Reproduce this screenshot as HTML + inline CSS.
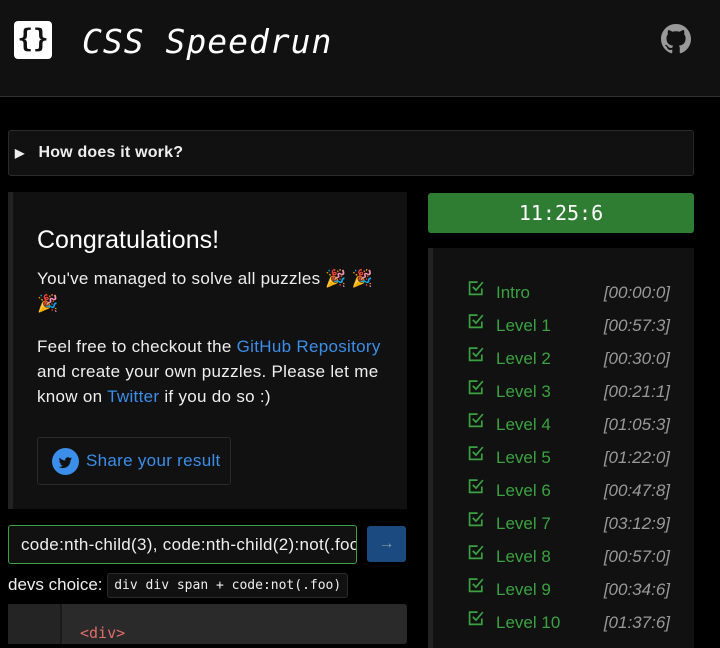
<!DOCTYPE html>
<html><head><style>
*{box-sizing:border-box;margin:0;padding:0}
body{width:720px;height:638px;overflow:hidden;background:#000;font-family:"Liberation Sans",sans-serif;color:#eee;position:relative}
.hdr{position:absolute;left:0;top:0;width:720px;height:97px;background:#111;border-bottom:1px solid #333}
.logo{position:absolute;left:14px;top:21px;width:38px;height:38px;background:#fff;border-radius:4px;color:#111;font:bold 26px "DejaVu Sans Mono",monospace;text-align:center;line-height:36px}
.title{position:absolute;left:82px;top:22px;font:33px "DejaVu Sans Mono",monospace;color:#fff;letter-spacing:1px;font-style:italic}
.det{position:absolute;left:8px;top:130px;width:686px;height:46px;background:#111;border:1px solid #2a2a2a;border-radius:3px;font-weight:bold;font-size:16px;line-height:44px;padding-left:6px;letter-spacing:.2px}
.det i{font-style:normal;font-size:12px;margin-right:14px}
.left{position:absolute;left:8px;top:192px;width:399px;height:317px;background:#111;border-left:5px solid #222;padding:34px 0 0 24px}
h2{font-weight:normal;font-size:25px;color:#fff;margin-bottom:11px}
p{font-size:17px;line-height:25px;color:#eee;letter-spacing:.3px}
a{color:#3b8eea;text-decoration:none}
.share{position:absolute;left:24px;top:245px;width:194px;height:48px;border:1px solid #2a2a2a;border-radius:3px;color:#3b8eea;font-size:17px;line-height:46px;padding-left:48px;letter-spacing:.3px}
.tw{position:absolute;left:14px;top:10px;width:27px;height:27px;border-radius:50%;background:#3b8eea}
.timer{position:absolute;left:428px;top:193px;width:266px;height:40px;background:#2e7d32;border-radius:3px;text-align:center;font:20px "DejaVu Sans Mono",monospace;line-height:40px;color:#fff}
.list{position:absolute;left:428px;top:248px;width:266px;height:400px;background:#111;border-left:5px solid #222}
.row{position:absolute;left:35px;width:202px;height:33px;font-size:17px}
.row svg{position:absolute;left:0;top:-3px}
.row .lb{position:absolute;left:28px;top:0;color:#3aa240}
.row .tm{position:absolute;right:0;top:0;color:#999;font-style:italic}
.inp{position:absolute;left:8px;top:525px;width:349px;height:39px;background:#111;border:1px solid #3aa240;border-radius:3px;font-size:17px;line-height:37px;padding-left:12px;white-space:nowrap;overflow:hidden;color:#eee;letter-spacing:.3px}
.btn{position:absolute;left:367px;top:526px;width:39px;height:36px;background:#1a4a80;border-radius:3px;color:#8899aa;text-align:center;line-height:36px;font-size:16px}
.dc{position:absolute;left:8px;top:573px;font-size:17px;line-height:22px}
.dc code{display:inline-block;background:#111;border:1px solid #2a2a2a;border-radius:3px;font:13px "DejaVu Sans Mono",monospace;padding:3px 6px;line-height:17px;vertical-align:middle}
.code{position:absolute;left:8px;top:604px;width:399px;height:40px;background:#2a2a2a;border-radius:3px}
.gut{position:absolute;left:0;top:0;width:54px;height:40px;background:#242424;border-right:2px solid #1a1a1a}
.code span{position:absolute;left:72px;top:20px;font:15px "DejaVu Sans Mono",monospace;color:#e06c6c}
</style></head><body>
<div class="hdr"><div class="logo">{}</div><div class="title">CSS Speedrun</div>
<svg style="position:absolute;left:661px;top:24px" width="30" height="30" viewBox="0 0 16 16"><path fill="#999" d="M8 0C3.580 0 0 3.58 0 8c0 3.54 2.29 6.530 5.470 7.59.4.07.55-.17.55-.38 0-.19-.01-.82-.01-1.49-2.01.37-2.53-.49-2.69-.94-.09-.23-.48-.94-.82-1.13-.28-.15-.68-.52-.01-.53.63-.01 1.080.58 1.23.82.72 1.21 1.87.87 2.33.66.07-.52.28-.87.51-1.07-1.78-.2-3.64-.89-3.64-3.950 0-.87.31-1.59.82-2.15-.08-.2-.36-1.020.08-2.12 0 0 .67-.21 2.2.82.64-.18 1.32-.27 2-.27.68 0 1.36.09 2 .27 1.53-1.04 2.2-.82 2.2-.82.44 1.1.16 1.92.08 2.12.51.56.82 1.27.82 2.150 0 3.07-1.87 3.75-3.65 3.95.29.25.54.73.54 1.480 0 1.07-.01 1.93-.01 2.2 0 .21.15.46.55.38A8.013 8.013 0 0016 8c0-4.42-3.58-8-8-8z"/></svg></div>
<div class="det"><i>▶</i>How does it work?</div>
<div class="left"><h2>Congratulations!</h2>
<p>You've managed to solve all puzzles 🎉 🎉<br>🎉</p><br>
<p>Feel free to checkout the <a>GitHub Repository</a><br>and create your own puzzles. Please let me<br>know on <a>Twitter</a> if you do so :)</p>
<div class="share"><div class="tw"><svg width="27" height="27" viewBox="0 0 27 27"><path fill="#111" d="M20 9.5c-.5.2-1 .4-1.6.4.6-.3 1-.9 1.2-1.5-.5.3-1.1.5-1.7.7-.5-.6-1.2-.9-2-.9-1.5 0-2.700 1.200-2.700 2.700 0 .2 0 .4.1.6-2.300-.1-4.300-1.200-5.600-2.800-.2.400-.4.900-.4 1.400 0 .9.5 1.800 1.200 2.200-.4 0-.9-.1-1.200-.3 0 1.300.9 2.400 2.200 2.700-.4.1-.8.1-1.200.1.3 1.100 1.300 1.900 2.500 1.900-1 .7-2.100 1.200-3.400 1.200H6.700c1.200.8 2.600 1.200 4.100 1.200 5 0 7.700-4.100 7.700-7.700v-.4c.6-.4 1-.9 1.500-1.500z"/></svg></div>Share your result</div></div>
<div class="timer">11:25:6</div>
<div class="list">
<svg width="0" height="0" style="position:absolute"><defs><symbol id="c" viewBox="0 0 16 16"><path d="M13 8v5.5H1.5V2H9" fill="none" stroke="#3aa240" stroke-width="1.6"/><path d="M4.5 6.5l3 3L14 2" fill="none" stroke="#3aa240" stroke-width="1.6"/></symbol></defs></svg>
<div class="row" style="top:35px"><svg width="17" height="17"><use href="#c"/></svg><div class="lb">Intro</div><div class="tm">[00:00:0]</div></div>
<div class="row" style="top:68px"><svg width="17" height="17"><use href="#c"/></svg><div class="lb">Level 1</div><div class="tm">[00:57:3]</div></div>
<div class="row" style="top:101px"><svg width="17" height="17"><use href="#c"/></svg><div class="lb">Level 2</div><div class="tm">[00:30:0]</div></div>
<div class="row" style="top:134px"><svg width="17" height="17"><use href="#c"/></svg><div class="lb">Level 3</div><div class="tm">[00:21:1]</div></div>
<div class="row" style="top:167px"><svg width="17" height="17"><use href="#c"/></svg><div class="lb">Level 4</div><div class="tm">[01:05:3]</div></div>
<div class="row" style="top:200px"><svg width="17" height="17"><use href="#c"/></svg><div class="lb">Level 5</div><div class="tm">[01:22:0]</div></div>
<div class="row" style="top:233px"><svg width="17" height="17"><use href="#c"/></svg><div class="lb">Level 6</div><div class="tm">[00:47:8]</div></div>
<div class="row" style="top:266px"><svg width="17" height="17"><use href="#c"/></svg><div class="lb">Level 7</div><div class="tm">[03:12:9]</div></div>
<div class="row" style="top:299px"><svg width="17" height="17"><use href="#c"/></svg><div class="lb">Level 8</div><div class="tm">[00:57:0]</div></div>
<div class="row" style="top:332px"><svg width="17" height="17"><use href="#c"/></svg><div class="lb">Level 9</div><div class="tm">[00:34:6]</div></div>
<div class="row" style="top:365px"><svg width="17" height="17"><use href="#c"/></svg><div class="lb">Level 10</div><div class="tm">[01:37:6]</div></div>
</div>
<div class="inp">code:nth-child(3), code:nth-child(2):not(.foo)</div>
<div class="btn">→</div>
<div class="dc">devs choice: <code>div div span + code:not(.foo)</code></div>
<div class="code"><div class="gut"></div><span>&lt;div&gt;</span></div>
</body></html>
